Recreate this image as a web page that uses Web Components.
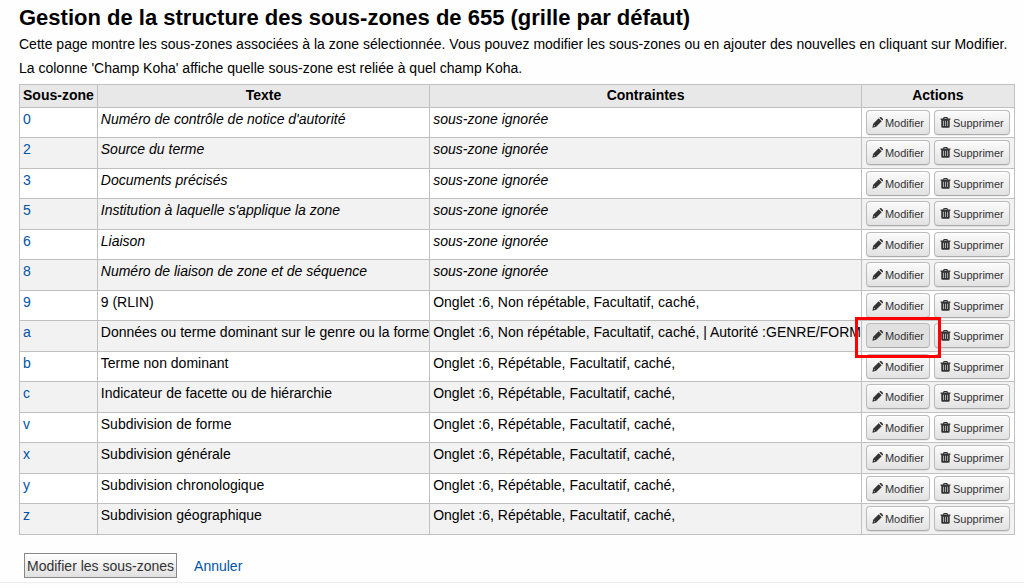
<!DOCTYPE html>
<html lang="fr">
<head>
<meta charset="utf-8">
<title>Gestion de la structure des sous-zones</title>
<style>
html{background:#fefefe}
body{margin:0;font:14px/16px "Liberation Sans",Arial,sans-serif;color:#000}
</style>
</head>
<body>
<subfields-page>
<span slot="title">Gestion de la structure des sous-zones de 655 (grille par défaut)</span>
<p>Cette page montre les sous-zones associées à la zone sélectionnée. Vous pouvez modifier les sous-zones ou en ajouter des nouvelles en cliquant sur Modifier.</p>
<p>La colonne 'Champ Koha' affiche quelle sous-zone est reliée à quel champ Koha.</p>
<subfields-table slot="table"></subfields-table>
<form-actions slot="actions"></form-actions>
</subfields-page>
<script>
class SubfieldsPage extends HTMLElement{
  constructor(){
    super();
    this.attachShadow({mode:'open'}).innerHTML=`<style>
:host{display:block;padding:4px 10px 0 19px}
h1{margin:0;font-size:22px;line-height:28px;font-weight:bold}
::slotted(p){margin:0;line-height:24px}
.table{padding-top:4px}
footer{margin:0 -10px 0 -19px;padding:18px 24px 4px;border-bottom:1px solid #ececec}
</style>
<main><h1><slot name="title"></slot></h1><slot></slot><div class="table"><slot name="table"></slot></div></main>
<footer><slot name="actions"></slot></footer>`;
  }
}
const ICONS={
  edit:'<path d="M.4 11.6 1.3 7.4 7.3 1.4 10.6 4.7 4.6 10.7ZM8.1.8 8.7.2Q9.5-.3 10.2.2L11.8 1.8Q12.3 2.5 11.8 3.3L11.2 3.9Z"/><path d="M2.2 8.6 3.4 9.8 2.6 10 2 9.4Z" fill="#eee"/>',
  delete:'<path fill-rule="evenodd" d="M4 0H8L8.7 1.6H11.4V3.1H10.6V10.4Q10.6 11.8 9.3 11.8H2.7Q1.4 11.8 1.4 10.4V3.1H.6V1.6H3.3ZM4.8 1 4.5 1.7H7.5L7.2 1ZM3.3 4.2V9.8H4V4.2ZM5.7 4.2V9.8H6.4V4.2ZM8.1 4.2V9.8H8.8V4.2Z"/>'
};
class ActionButton extends HTMLElement{
  connectedCallback(){
    this.attachShadow({mode:'open'}).innerHTML=`<style>
:host{display:block;position:relative}
button{display:flex;align-items:center;gap:2px;box-sizing:border-box;height:25px;margin:0;padding:0 5px;font:11px/16px "Liberation Sans",Arial,sans-serif;color:#333;white-space:nowrap;border:1px solid #bbb;border-bottom-color:#aaa;border-radius:4px;background:linear-gradient(#fbfbfb,#e2e2e2);box-shadow:inset 0 1px 0 #fff,0 1px 1px rgba(0,0,0,.08)}
svg{width:11px;height:11px;fill:#333;flex:none}
:host([active]) button{background:#e0e0e0;box-shadow:none}
:host([active])::after{content:"";position:absolute;z-index:2;inset:-6px -11px -10px -11px;border:3px solid #f00}
</style><button type="button"><svg viewBox="0 0 12 12" aria-hidden="true">${ICONS[this.getAttribute('icon')]}</svg><span><slot></slot></span></button>`;
  }
}
const IGNORED='sous-zone ignorée', OPTIONAL='Onglet :6, Répétable, Facultatif, caché,';
const ROWS=[
  ['0',"Numéro de contrôle de notice d'autorité",IGNORED],
  ['2','Source du terme',IGNORED],
  ['3','Documents précisés',IGNORED],
  ['5',"Institution à laquelle s'applique la zone",IGNORED],
  ['6','Liaison',IGNORED],
  ['8','Numéro de liaison de zone et de séquence',IGNORED],
  ['9','9 (RLIN)','Onglet :6, Non répétable, Facultatif, caché,'],
  ['a','Données ou terme dominant sur le genre ou la forme','Onglet :6, Non répétable, Facultatif, caché, | Autorité :GENRE/FORM',true],
  ['b','Terme non dominant',OPTIONAL],
  ['c','Indicateur de facette ou de hiérarchie',OPTIONAL],
  ['v','Subdivision de forme',OPTIONAL],
  ['x','Subdivision générale',OPTIONAL],
  ['y','Subdivision chronologique',OPTIONAL],
  ['z','Subdivision géographique',OPTIONAL]
];
class SubfieldsTable extends HTMLElement{
  constructor(){
    super();
    const rows=ROWS.map(([code,text,rule,active])=>`<tr class="${rule===IGNORED?'ignored':''}"><td><a href="#${code}">${code}</a></td><td class="text">${text}</td><td class="text">${rule}</td><td><div class="actions"><action-button icon="edit"${active?' active':''}>Modifier</action-button><action-button icon="delete">Supprimer</action-button></div></td></tr>`).join('');
    this.attachShadow({mode:'open'}).innerHTML=`<style>
:host{display:block}
table{width:100%;border-collapse:collapse;font-size:14px;line-height:16px}
th,td{border:1px solid #c0c0c0;white-space:nowrap}
th{padding:2px 3px 4px;background:#e8e8e8;text-align:center}
td{padding:3px 0 0 3px;vertical-align:top;background:#fff}
td:last-child{padding:2px 4px 0}
tr:nth-child(even) td{background:#f2f2f2}
tbody tr{height:30px}
tbody tr:nth-child(even){height:31px}
.ignored .text{font-style:italic}
.actions{display:flex;gap:4px}
.code{width:78px}
.buttons{width:153px}
a{color:#0054a6;text-decoration:none}
</style>
<table><colgroup><col class="code"><col><col><col class="buttons"></colgroup>
<thead><tr><th>Sous-zone</th><th>Texte</th><th>Contraintes</th><th>Actions</th></tr></thead><tbody>${rows}</tbody></table>`;
  }
}
class FormActions extends HTMLElement{
  constructor(){
    super();
    this.attachShadow({mode:'open'}).innerHTML=`<style>
:host{display:flex;align-items:center;gap:17px}
button{box-sizing:border-box;height:25px;margin:0;padding:0 2px;font:14px/16px "Liberation Sans",Arial,sans-serif;color:#333;border:1px solid #888;border-radius:0;background:linear-gradient(#fff,#e0e0e0)}
a{color:#0054a6;text-decoration:none}
</style><button type="submit">Modifier les sous-zones</button><a href="#annuler">Annuler</a>`;
  }
}
customElements.define('action-button',ActionButton);
customElements.define('subfields-table',SubfieldsTable);
customElements.define('form-actions',FormActions);
customElements.define('subfields-page',SubfieldsPage);
</script>
</body>
</html>
